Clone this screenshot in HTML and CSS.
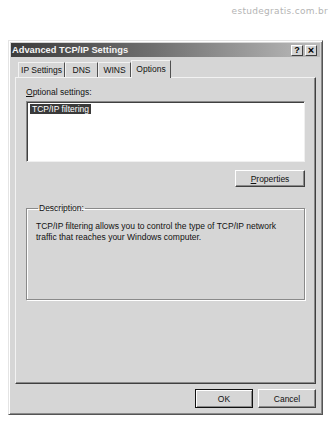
FILE: index.html
```html
<!DOCTYPE html>
<html>
<head>
	<meta charset="utf-8">
	<title>Advanced TCP/IP Settings</title>
	<link rel="stylesheet" href="styles.css">
</head>
<body>
  <div class="watermark">estudegratis.com.br</div>

  <div class="dialog">
    <div class="titlebar">
      <span class="title">Advanced TCP/IP Settings</span>
      <span class="tbtn">?</span>
      <span class="tbtn close">&#215;</span>
    </div>

    <div class="tabs">
      <span class="tab tab-ip">IP Settings</span>
      <span class="tab tab-dns">DNS</span>
      <span class="tab tab-wins">WINS</span>
      <span class="tab active">Options</span>
    </div>

    <div class="panel">
      <div class="label"><u>O</u>ptional settings:</div>
      <div class="listbox">
        <span class="item selected">TCP/IP filtering</span>
      </div>
      <div class="row-right">
        <button class="btn btn-props"><u>P</u>roperties</button>
      </div>

      <fieldset class="group">
        <legend>Description:</legend>
        <p>TCP/IP filtering allows you to control the type of TCP/IP network<br>traffic that reaches your Windows computer.</p>
      </fieldset>
    </div>

    <div class="buttons">
      <button class="btn btn-ok">OK</button>
      <button class="btn">Cancel</button>
    </div>
  </div>
</body>
</html>
```

FILE: styles.css
```css
html body{
  margin: 0;
  background: #ffffff;
  font-family: "Liberation Sans", Arial, sans-serif;
  font-size: 8.5px;
  color: #111;
}

.watermark{
  height: 14px;
  padding-top: 6px;
  padding-right: 3px;
  text-align: right;
  font-family: "DejaVu Sans", sans-serif;
  font-size: 9px;
  letter-spacing: 0.3px;
  color: #b4b4b4;
}

.dialog{
  box-sizing: border-box;
  margin-top: 20px;
  margin-left: 8px;
  width: 315px;
  height: 375px;
  background: #d6d6d6;
  border-top: 1px solid #e4e4e4;
  border-left: 1px solid #e4e4e4;
  border-right: 1px solid #555;
  border-bottom: 1px solid #555;
  box-shadow: inset 1px 1px 0 #fff, inset -1px -1px 0 #8a8a8a;
  padding: 2px;
  display: flex;
  flex-direction: column;
}

.titlebar{
  height: 14px;
  display: flex;
  align-items: center;
  padding: 0 3px 0 1px;
  background: linear-gradient(to right, #3c3c3c 0%, #6e6e6e 45%, #bcbcbc 100%);
}

.title{
  flex: 1;
  color: #f4f4f4;
  font-weight: bold;
  font-size: 9.3px;
  font-family: "Liberation Sans", Arial, sans-serif;
}

.tbtn{
  box-sizing: border-box;
  width: 12px;
  height: 11px;
  margin-left: 2px;
  background: #d4d4d4;
  border-top: 1px solid #fff;
  border-left: 1px solid #fff;
  border-right: 1px solid #404040;
  border-bottom: 1px solid #404040;
  font-weight: bold;
  font-size: 9px;
  line-height: 9px;
  text-align: center;
  color: #000;
}

.close{
  font-size: 11px;
}

.tabs{
  display: flex;
  align-items: flex-end;
  height: 17px;
  margin-top: 3px;
  padding-left: 7px;
}

.tab{
  box-sizing: border-box;
  height: 15px;
  line-height: 14px;
  padding: 0 2px;
  border-top: 1px solid #f2f2f2;
  border-left: 1px solid #f2f2f2;
  border-right: 1px solid #505050;
  white-space: nowrap;
  text-align: center;
}

.tab-ip{ width: 47px; }
.tab-dns{ width: 33px; }
.tab-wins{ width: 33px; }

.tab.active{
  width: 40px;
  height: 18px;
  margin-bottom: -1px;
  background: #d6d6d6;
  position: relative;
  line-height: 16px;
}

.panel{
  box-sizing: border-box;
  margin: 0 4px;
  height: 307px;
  border-top: 1px solid #f2f2f2;
  border-left: 1px solid #f2f2f2;
  border-right: 1px solid #404040;
  border-bottom: 1px solid #404040;
  box-shadow: inset -1px -1px 0 #8a8a8a;
  padding: 9px 10px 0 10px;
}

.label{
  height: 12px;
}

.listbox{
  box-sizing: border-box;
  height: 61px;
  margin-top: 2px;
  background: #fff;
  border-top: 1px solid #8a8a8a;
  border-left: 1px solid #8a8a8a;
  border-right: 1px solid #f0f0f0;
  border-bottom: 1px solid #f0f0f0;
  box-shadow: inset 1px 1px 0 #404040;
  padding: 2px 3px;
}

.item{
  display: inline-block;
  height: 10px;
  line-height: 10px;
  padding: 0 2px;
}

.selected{
  background: #3a3a3a;
  color: #fff;
}

.row-right{
  display: flex;
  justify-content: flex-end;
  margin-top: 8px;
}

.btn{
  box-sizing: border-box;
  width: 70px;
  height: 17px;
  padding: 0;
  background: #d6d6d6;
  border-top: 1px solid #fff;
  border-left: 1px solid #fff;
  border-right: 1px solid #404040;
  border-bottom: 1px solid #404040;
  box-shadow: inset -1px -1px 0 #8a8a8a;
  font-family: "Liberation Sans", Arial, sans-serif;
  font-size: 8.5px;
  color: #111;
}

.group{
  box-sizing: border-box;
  height: 97px;
  margin: 16px 0 0 0;
  padding: 8px 8px 0 9px;
  border: 1px solid #8a8a8a;
  box-shadow: 1px 1px 0 #fff, inset 1px 1px 0 #fff;
}

.group legend{
  padding: 0 1px;
  margin-left: 2px;
}

.group p{
  margin: 0;
  line-height: 11px;
}

.buttons{
  display: flex;
  justify-content: flex-end;
  gap: 5px;
  margin-top: 5px;
  padding-right: 4px;
}

.buttons .btn{
  width: 58px;
  height: 19px;
}

.btn-ok{
  border: 1px solid #111;
  box-shadow: inset 1px 1px 0 #fff, inset -1px -1px 0 #8a8a8a;
}
```
